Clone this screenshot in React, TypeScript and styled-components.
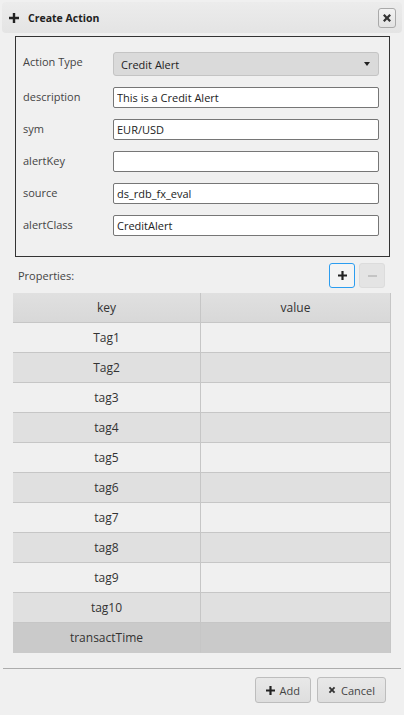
import React from 'react';
import styled, { createGlobalStyle } from 'styled-components';

const GlobalStyle = createGlobalStyle`
  html, body {
    margin: 0;
    padding: 0;
    background: #f0f0f0;
    font-family: "Open Sans", "Noto Sans", sans-serif;
    color: #333;
  }
`;

const properties = ['Tag1', 'Tag2', 'tag3', 'tag4', 'tag5', 'tag6', 'tag7', 'tag8', 'tag9', 'tag10', 'transactTime'];

const fields = [
  { label: 'description', value: 'This is a Credit Alert' },
  { label: 'sym', value: 'EUR/USD' },
  { label: 'alertKey', value: '' },
  { label: 'source', value: 'ds_rdb_fx_eval' },
  { label: 'alertClass', value: 'CreditAlert' },
];

const PlusIcon: React.FC<{ size?: number }> = ({ size = 10 }) => (
  <svg width={size} height={size} viewBox="0 0 10 10">
    <path d="M3.8 0h2.4v3.8H10v2.4H6.2V10H3.8V6.2H0V3.8h3.8z" fill="#222" />
  </svg>
);

const CrossIcon: React.FC<{ size?: number }> = ({ size = 9 }) => (
  <svg width={size} height={size} viewBox="0 0 10 10">
    <path d="M1 2.6L2.6 1 5 3.4 7.4 1 9 2.6 6.6 5 9 7.4 7.4 9 5 6.6 2.6 9 1 7.4 3.4 5z" fill="#333" />
  </svg>
);

const App: React.FC = () => {
  return (
    <>
      <GlobalStyle />
      <Dialog>
        <Header>
          <PlusIcon />
          <Title>Create Action</Title>
          <CloseButton>
            <CrossIcon size={10} />
          </CloseButton>
        </Header>

        <Frame>
          <FieldRow>
            <Label>Action Type</Label>
            <Select>
              <span>Credit Alert</span>
              <Caret />
            </Select>
          </FieldRow>
          {fields.map((f) => (
            <FieldRow key={f.label}>
              <Label>{f.label}</Label>
              <Input defaultValue={f.value} />
            </FieldRow>
          ))}
        </Frame>

        <PropsBar>
          <PropsLabel>Properties:</PropsLabel>
          <IconButton $focused>
            <PlusIcon size={9} />
          </IconButton>
          <IconButton $disabled>
            <Minus />
          </IconButton>
        </PropsBar>

        <Grid>
          <HeadCell>key</HeadCell>
          <HeadCell>value</HeadCell>
          {properties.map((p, i) => {
            const tone = p === 'transactTime' ? 'selected' : i % 2 ? 'even' : 'odd';
            return (
              <React.Fragment key={p}>
                <Cell $tone={tone}>{p}</Cell>
                <Cell $tone={tone} />
              </React.Fragment>
            );
          })}
        </Grid>

        <Footer>
          <FooterButton>
            <PlusIcon size={9} />
            Add
          </FooterButton>
          <FooterButton>
            <CrossIcon size={8} />
            Cancel
          </FooterButton>
        </Footer>
      </Dialog>
    </>
  );
};

export default App;

const Dialog = styled.div`
  width: 404px;
  height: 715px;
  display: flex;
  flex-direction: column;
  box-sizing: border-box;
`;

const Header = styled.div`
  height: 31px;
  margin: 2px 2px 0;
  padding: 0 6px 0 7px;
  display: flex;
  align-items: center;
  gap: 9px;
  border-radius: 4px;
  background: linear-gradient(#ececec, #e4e4e4);
`;

const Title = styled.span`
  flex: 1;
  font-size: 10.5px;
  font-weight: 700;
  color: #222;
`;

const CloseButton = styled.div`
  width: 16px;
  height: 18px;
  display: flex;
  align-items: center;
  justify-content: center;
  border: 1px solid #a9a9a9;
  border-radius: 3px;
  background: linear-gradient(#f2f2f2, #e2e2e2);
`;

const Frame = styled.div`
  margin: 3px 14px 0 15px;
  padding: 15px 10px 20px 7px;
  border: 1px solid #333;
  display: flex;
  flex-direction: column;
  gap: 11px;
`;

const FieldRow = styled.div`
  display: grid;
  grid-template-columns: 90px 1fr;
  align-items: start;
`;

const Label = styled.div`
  font-size: 11px;
  line-height: 15px;
  padding-top: 2px;
  color: #444;
`;

const Select = styled.div`
  height: 22px;
  padding: 0 7px;
  display: flex;
  align-items: center;
  justify-content: space-between;
  border: 1px solid #c4c4c4;
  border-radius: 3px;
  background: #dadada;
  font-size: 11px;
  color: #222;
`;

const Caret = styled.span`
  width: 0;
  height: 0;
  margin-right: 1px;
  border-left: 3.5px solid transparent;
  border-right: 3.5px solid transparent;
  border-top: 4px solid #222;
`;

const Input = styled.input`
  height: 21px;
  box-sizing: border-box;
  padding: 0 3px;
  margin: 0;
  border: 1px solid #767676;
  border-radius: 2px;
  background: #fff;
  font-family: inherit;
  font-size: 11px;
  color: #222;
  outline: none;
`;

const PropsBar = styled.div`
  margin: 6px 19px 0 18px;
  height: 25px;
  display: flex;
  align-items: center;
  gap: 4px;
`;

const PropsLabel = styled.span`
  flex: 1;
  font-size: 11px;
  color: #444;
`;

const IconButton = styled.div<{ $focused?: boolean; $disabled?: boolean }>`
  width: 24px;
  height: 23px;
  display: flex;
  align-items: center;
  justify-content: center;
  border-radius: 3px;
  border: 1px solid ${(p) => (p.$focused ? '#2b9df0' : '#dcdcdc')};
  background: ${(p) => (p.$disabled ? '#e4e4e4' : '#f4f4f4')};
`;

const Minus = styled.span`
  width: 9px;
  height: 2px;
  background: #c4c4c4;
`;

const Grid = styled.div`
  margin: 5px 13px 0 13px;
  display: grid;
  grid-template-columns: 188px 1fr;
  border-right: 1px solid #c6c6c6;
`;

const HeadCell = styled.div`
  height: 29px;
  display: flex;
  align-items: center;
  justify-content: center;
  background: linear-gradient(#e0e0e0, #d8d8d8);
  border-bottom: 1px solid #c6c6c6;
  font-size: 12px;
  color: #333;

  &:nth-child(2n + 1) {
    border-right: 1px solid #c6c6c6;
  }
`;

const toneColor = {
  odd: '#f0f0f0',
  even: '#e0e0e0',
  selected: '#cacaca',
};

const Cell = styled.div<{ $tone: 'odd' | 'even' | 'selected' }>`
  height: 29px;
  display: flex;
  align-items: center;
  justify-content: center;
  background: ${(p) => toneColor[p.$tone]};
  border-bottom: 1px solid ${(p) => (p.$tone === 'selected' ? '#cacaca' : '#c6c6c6')};
  font-size: 12px;
  color: #333;

  &:nth-child(2n + 1) {
    border-right: 1px solid #c6c6c6;
  }
`;

const Footer = styled.div`
  margin: 15px 3px 0;
  padding: 8px 15px 0 0;
  border-top: 1px solid #acacac;
  display: flex;
  justify-content: flex-end;
  gap: 6px;
`;

const FooterButton = styled.div`
  height: 24px;
  padding: 0 10px;
  display: flex;
  align-items: center;
  gap: 5px;
  border: 1px solid #bdbdbd;
  border-radius: 3px;
  background: linear-gradient(#e8e8e8, #dedede);
  font-size: 11px;
  color: #444;
`;
